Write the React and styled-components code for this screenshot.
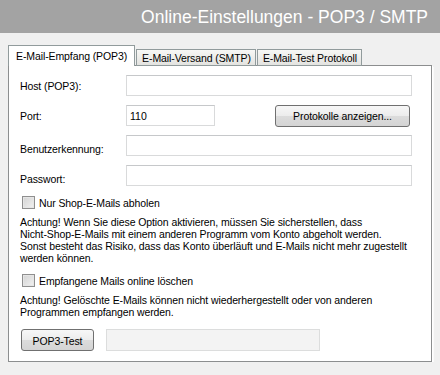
import React from "react";
import styled, { createGlobalStyle } from "styled-components";

const GlobalStyle = createGlobalStyle`
  body {
    margin: 0;
    background: #f0f0f0;
    font-family: "Liberation Sans", Arial, sans-serif;
    font-size: 10.5px;
    letter-spacing: -0.1px;
    color: #000;
  }
`;

function App() {
  return (
    <>
      <GlobalStyle />
      <Header>
        <Title>Online-Einstellungen - POP3 / SMTP</Title>
      </Header>
      <Content>
        <Tabs>
          <Tab active>E-Mail-Empfang (POP3)</Tab>
          <Tab>E-Mail-Versand (SMTP)</Tab>
          <Tab>E-Mail-Test Protokoll</Tab>
        </Tabs>
        <Panel>
          <Row>
            <Label>Host (POP3):</Label>
            <TextInput readOnly value="" />
          </Row>
          <Row>
            <Label>Port:</Label>
            <TextInput readOnly value="110" width="89px" />
            <Spacer />
            <Button width="135px">Protokolle anzeigen...</Button>
          </Row>
          <Row>
            <Label low>Benutzerkennung:</Label>
            <TextInput readOnly value="" />
          </Row>
          <Row>
            <Label low>Passwort:</Label>
            <TextInput readOnly value="" />
          </Row>
          <CheckRow>
            <Box />
            Nur Shop-E-Mails abholen
          </CheckRow>
          <Note>
            Achtung! Wenn Sie diese Option aktivieren, müssen Sie sicherstellen, dass
            <br />
            Nicht-Shop-E-Mails mit einem anderen Programm vom Konto abgeholt werden.
            <br />
            Sonst besteht das Risiko, dass das Konto überläuft und E-Mails nicht mehr zugestellt
            <br />
            werden können.
          </Note>
          <CheckRow>
            <Box />
            Empfangene Mails online löschen
          </CheckRow>
          <Note>
            Achtung! Gelöschte E-Mails können nicht wiederhergestellt oder von anderen
            <br />
            Programmen empfangen werden.
          </Note>
          <TestRow>
            <Button width="73px">POP3-Test</Button>
            <Progress />
          </TestRow>
        </Panel>
      </Content>
    </>
  );
}

export default App;

const Header = styled.div`
  height: 33px;
  background: #a3a3a3;
  display: flex;
  align-items: center;
  justify-content: flex-end;
  padding-right: 12px;
`;

const Title = styled.div`
  color: #fff;
  font-size: 17.5px;
  letter-spacing: 0;
  margin-top: 2px;
`;

const Content = styled.div`
  padding: 13px 0 0 8px;
`;

const Tabs = styled.div`
  display: flex;
  align-items: flex-end;
  gap: 1px;
  height: 20px;
  position: relative;
  z-index: 1;
  margin-bottom: -1px;
`;

const Tab = styled.div`
  height: ${(p) => (p.active ? "21px" : "17px")};
  padding: ${(p) => (p.active ? "0 7px" : "1px 4px 0 5px")};
  border: 1px solid #919b9c;
  border-bottom: ${(p) => (p.active ? "none" : "1px solid #919b9c")};
  background: ${(p) =>
    p.active ? "#fff" : "linear-gradient(#f7f7f5, #e3e3e0)"};
  display: flex;
  align-items: center;
  white-space: nowrap;
  box-sizing: border-box;
`;

const Panel = styled.div`
  width: 424px;
  height: 297px;
  box-sizing: border-box;
  border: 1px solid #8c8e8f;
  box-shadow: 1px 1px 0 #fff, 2px 2px 0 #fafafa;
  background: #fff;
  padding: 9px 0 0 11px;
`;

const Row = styled.div`
  display: flex;
  align-items: center;
  height: 21px;
  width: 392px;
  margin-bottom: 9px;
`;

const Label = styled.div`
  width: 106px;
  flex-shrink: 0;
  padding-top: ${(p) => (p.low ? "6px" : "0")};
`;

const TextInput = styled.input`
  width: ${(p) => p.width || "286px"};
  height: 21px;
  box-sizing: border-box;
  border: 1px solid #d9dadb;
  border-top-color: #c6c8ca;
  padding: 0 3px;
  font-family: inherit;
  font-size: 10.5px;
  color: #000;
  outline: none;
  background: #fff;
`;

const Spacer = styled.div`
  flex: 1;
`;

const Button = styled.div`
  width: ${(p) => p.width};
  height: 22px;
  box-sizing: border-box;
  border: 1px solid #707070;
  border-radius: 3px;
  background: linear-gradient(#f7f7f7 0%, #ececec 50%, #dcdcdc 51%, #d4d4d4 100%);
  display: flex;
  align-items: center;
  justify-content: center;
  padding-top: 1px;
  flex-shrink: 0;
  margin-right: 2px;
`;

const CheckRow = styled.div`
  display: flex;
  align-items: center;
  gap: 4px;
  margin: 1px 0 0 2px;
  height: 15px;
`;

const Box = styled.span`
  width: 13px;
  height: 13px;
  box-sizing: border-box;
  border: 1px solid #8f8f8f;
  background: linear-gradient(135deg, #d3d3d3, #f2f2f2);
  box-shadow: inset 0 0 0 1px #e6e6e6;
  flex-shrink: 0;
`;

const Note = styled.p`
  margin: 6px 0 9px;
  line-height: 12px;
  white-space: nowrap;
`;

const TestRow = styled.div`
  display: flex;
  align-items: center;
  gap: 10px;
  margin: 11px 0 0 1px;
`;

const Progress = styled.div`
  width: 214px;
  height: 22px;
  box-sizing: border-box;
  border: 1px solid #dcdddd;
  background: #f3f3f3;
`;
